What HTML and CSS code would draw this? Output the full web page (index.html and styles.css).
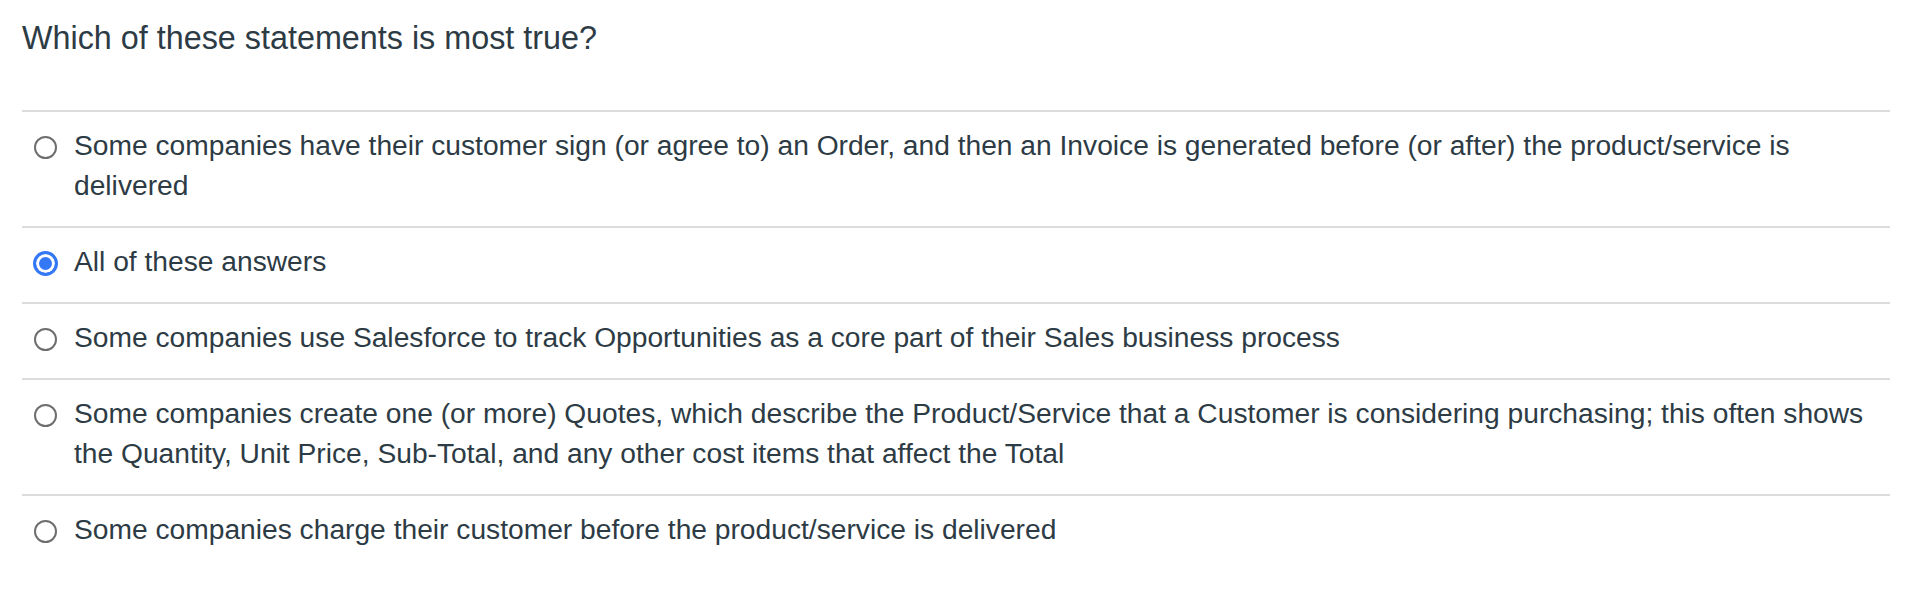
FILE: index.html
```html
<!DOCTYPE html>
<html lang="en">
<head>
<meta charset="utf-8">
<title>Quiz question</title>
<link rel="stylesheet" href="styles.css">
</head>
<body>
<div class="quiz">
  <h1 class="question">Which of these statements is most true?</h1>
  <ul class="answers">
    <li class="answer">
      <span class="radio-cell"><span class="radio"></span></span>
      <span class="label">Some companies have their customer sign (or agree to) an Order, and then an Invoice is generated before (or after) the product/service is delivered</span>
    </li>
    <li class="answer">
      <span class="radio-cell"><span class="radio checked"></span></span>
      <span class="label">All of these answers</span>
    </li>
    <li class="answer">
      <span class="radio-cell"><span class="radio"></span></span>
      <span class="label">Some companies use Salesforce to track Opportunities as a core part of their Sales business process</span>
    </li>
    <li class="answer">
      <span class="radio-cell"><span class="radio"></span></span>
      <span class="label">Some companies create one (or more) Quotes, which describe the Product/Service that a Customer is considering purchasing; this often shows the Quantity, Unit Price, Sub-Total, and any other cost items that affect the Total</span>
    </li>
    <li class="answer">
      <span class="radio-cell"><span class="radio"></span></span>
      <span class="label">Some companies charge their customer before the product/service is delivered</span>
    </li>
  </ul>
</div>
</body>
</html>
```
FILE: styles.css
```css
html, body {
  margin: 0;
  padding: 0;
  background: #ffffff;
}

body {
  font-family: "Liberation Sans", Arial, sans-serif;
  color: #2d3b45;
}

.quiz {
  padding: 18px 18px 0 22px;
}

.question {
  margin: 0 0 52px;
  font-size: 32.35px;
  line-height: 40px;
  font-weight: normal;
  color: #2d3b45;
}

.answers {
  list-style: none;
  margin: 0;
  padding: 0;
  border-top: 2px solid #dcdcdc;
}

.answer {
  display: flex;
  align-items: flex-start;
  padding: 13px 0 21px 12px;
  border-bottom: 2px solid #dcdcdc;
  font-size: 28.2px;
  line-height: 40px;
}

.answer:last-child {
  border-bottom: none;
}

.radio-cell {
  flex: 0 0 23px;
  min-width: 0;
  height: 40px;
  margin-right: 17px;
  display: flex;
  justify-content: center;
  align-items: flex-start;
}

.radio {
  box-sizing: border-box;
  flex: 0 0 23px;
  width: 23px;
  height: 23px;
  margin-top: 11px;
  border: 2px solid #6e6e6e;
  border-radius: 50%;
  background: #ffffff;
}

.radio.checked {
  flex: 0 0 25px;
  width: 25px;
  height: 25px;
  margin: 10px -1px 0;
  border: 3px solid #3478f6;
  background: #3478f6;
  box-shadow: inset 0 0 0 3px #ffffff;
}

.label {
  flex: 1 1 auto;
}
```
